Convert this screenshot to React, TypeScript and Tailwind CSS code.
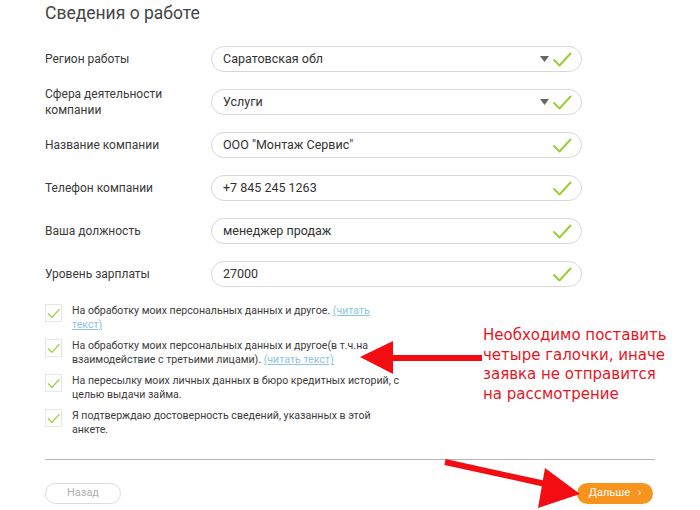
import React from "react";

const Check = ({ className = "" }: { className?: string }) => (
  <svg viewBox="0 0 20 16" className={className} fill="none">
    <path d="M2 8.5 L7.5 14 L18.5 2" stroke="#9acd3c" strokeWidth="2" strokeLinecap="round" strokeLinejoin="round" />
  </svg>
);

const rows: { label: string[]; value: string; select?: boolean }[] = [
  { label: ["Регион работы"], value: "Саратовская обл", select: true },
  { label: ["Сфера деятельности", "компании"], value: "Услуги", select: true },
  { label: ["Название компании"], value: "ООО \"Монтаж Сервис\"" },
  { label: ["Телефон компании"], value: "+7 845 245 1263" },
  { label: ["Ваша должность"], value: "менеджер продаж" },
  { label: ["Уровень зарплаты"], value: "27000" },
];

const Box = () => (
  <div className="w-[17px] h-[18px] border border-[#e6e6e6] flex items-center justify-center shrink-0 mt-[0px]">
    <Check className="w-[13px] h-[11px]" />
  </div>
);

const Link = () => <span className="text-[#8ec4df] underline">(читать</span>;

export default function App() {
  return (
    <div className="relative w-[700px] h-[510px] bg-white overflow-hidden text-[#3c3c3c]" style={{ fontFamily: "Roboto, 'Noto Sans', sans-serif" }}>
      <div className="pl-[45px] pr-[45px]">
        <h1 className="text-[17.5px] leading-[26px] pt-0 text-[#454545]">Сведения о работе</h1>
        <div className="mt-[20px] flex flex-col gap-[17px]">
          {rows.map((r, i) => (
            <div key={i} className="flex items-center h-[26px]">
              <div className="w-[166px] text-[12px] leading-[16px] text-[#3a3a3a]">
                {r.label.map((l, j) => (
                  <div key={j}>{l}</div>
                ))}
              </div>
              <div className="w-[371px] h-[26px] border border-[#d8d8d8] rounded-full flex items-center pl-[11px] pr-[9px] text-[12.5px] text-[#333]">
                <span className="flex-1">{r.value}</span>
                {r.select && (
                  <svg width="9" height="6" viewBox="0 0 9 6" className="mr-[3px]">
                    <path d="M0 0 H9 L4.5 6 Z" fill="#666" />
                  </svg>
                )}
                <Check className="w-[20px] h-[17px]" />
              </div>
            </div>
          ))}
        </div>

        <div className="mt-[17px] flex flex-col gap-[7px] text-[10.6px] leading-[14px] text-[#3c3c3c]">
          <div className="flex gap-[10px]">
            <Box />
            <div className="whitespace-nowrap">
              На обработку моих персональных данных и другое. <Link />
              <br />
              <span className="text-[#8ec4df] underline">текст)</span>
            </div>
          </div>
          <div className="flex gap-[10px]">
            <Box />
            <div className="whitespace-nowrap">
              На обработку моих персональных данных и другое(в т.ч.на
              <br />
              взаимодействие с третьими лицами). <span className="text-[#8ec4df] underline">(читать текст)</span>
            </div>
          </div>
          <div className="flex gap-[10px]">
            <Box />
            <div className="whitespace-nowrap">
              На пересылку моих личных данных в бюро кредитных историй, с
              <br />
              целью выдачи займа.
            </div>
          </div>
          <div className="flex gap-[10px]">
            <Box />
            <div className="whitespace-nowrap">
              Я подтверждаю достоверность сведений, указанных в этой
              <br />
              анкете.
            </div>
          </div>
        </div>

        <div className="mt-[22px] h-px bg-[#b5b5b5] w-[610px]" />

        <div className="mt-[23px] flex justify-between w-[608px]">
          <div className="w-[76px] h-[21px] rounded-full border border-[#dcdcdc] flex items-center justify-center text-[11px] text-[#b0b0b0]" style={{ fontFamily: "'Liberation Sans Narrow', 'Roboto', sans-serif" }}>
            Назад
          </div>
          <div className="w-[76px] h-[21px] rounded-full bg-[#f7941d] flex items-center justify-center text-[11px] text-white gap-[8px]" style={{ fontFamily: "'Liberation Sans Narrow', 'Roboto', sans-serif" }}>
            <span>Дальше</span>
            <span>›</span>
          </div>
        </div>
      </div>

      <div className="absolute left-[483px] top-[326px] text-[15px] leading-[19.5px] text-[#e8141e]" style={{ fontFamily: "'DejaVu Sans', sans-serif" }}>
        <div>Необходимо поставить</div>
        <div>четыре галочки, иначе</div>
        <div>заявка не отправится</div>
        <div>на рассмотрение</div>
      </div>

      <svg className="absolute left-0 top-0 pointer-events-none" width="700" height="510">
        <rect x="390" y="355" width="92" height="6" fill="#f30d12" />
        <polygon points="360,357 393,341 393,374" fill="#f30d12" />
        <line x1="445" y1="462" x2="550" y2="485" stroke="#f30d12" strokeWidth="6" />
        <polygon points="545,468 538,508 580,494" fill="#f30d12" />
      </svg>
    </div>
  );
}
